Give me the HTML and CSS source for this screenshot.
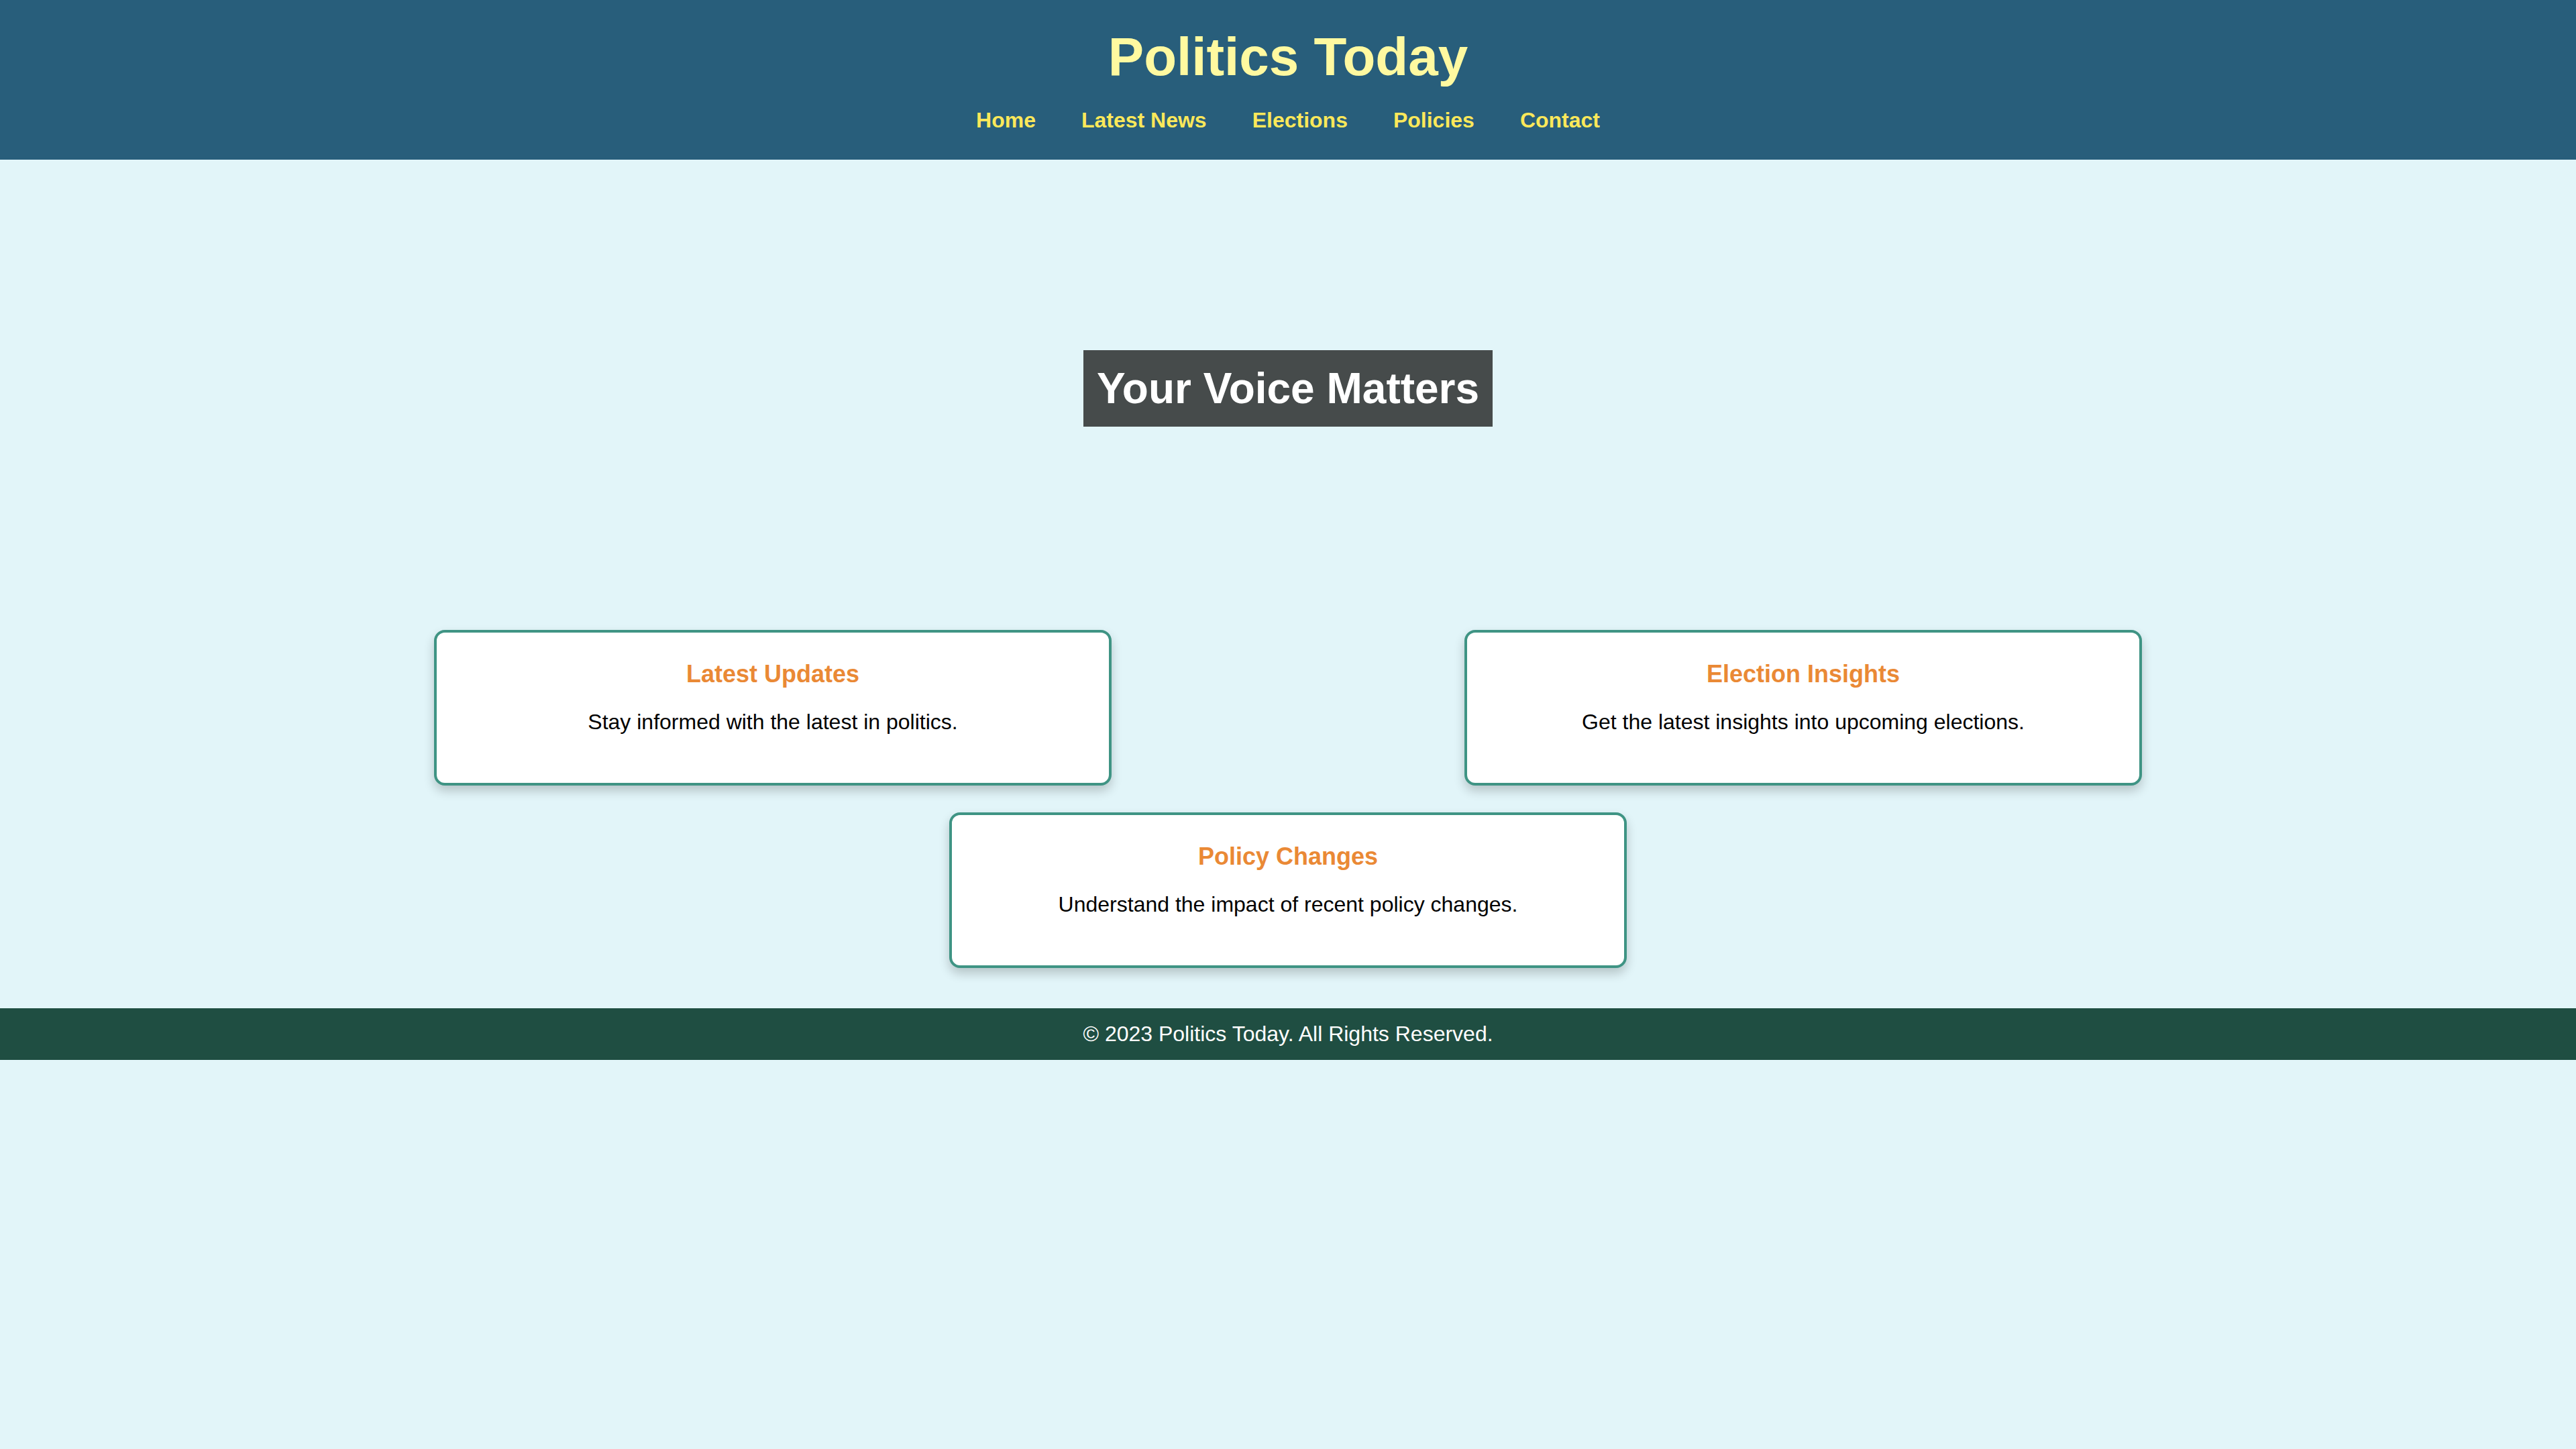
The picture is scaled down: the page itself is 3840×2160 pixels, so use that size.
FILE: index.html
```html
<!DOCTYPE html>
<html lang="en">
<head>
<meta charset="utf-8">
<title>Politics Today</title>
<link rel="stylesheet" href="styles.css">
</head>
<body>
<header class="site-header">
  <h1 class="site-title">Politics Today</h1>
  <nav class="site-nav">
    <a href="#">Home</a>
    <a href="#">Latest News</a>
    <a href="#">Elections</a>
    <a href="#">Policies</a>
    <a href="#">Contact</a>
  </nav>
</header>
<section class="hero">
  <h2 class="hero-title">Your Voice Matters</h2>
</section>
<main class="cards">
  <div class="card">
    <h3>Latest Updates</h3>
    <p>Stay informed with the latest in politics.</p>
  </div>
  <div class="card">
    <h3>Election Insights</h3>
    <p>Get the latest insights into upcoming elections.</p>
  </div>
  <div class="card">
    <h3>Policy Changes</h3>
    <p>Understand the impact of recent policy changes.</p>
  </div>
</main>
<footer class="site-footer">
  <p>&copy; 2023 Politics Today. All Rights Reserved.</p>
</footer>
</body>
</html>
```

FILE: styles.css
```css
html, body {
  margin: 0;
  padding: 0;
}
body {
  background: #e2f5f9;
  font-family: "Liberation Sans", Arial, Helvetica, sans-serif;
  color: #000;
}
.site-header {
  background: #285e7b;
  text-align: center;
  padding: 39px 0 40px;
}
.site-title {
  margin: 0 0 30px;
  font-size: 80px;
  line-height: 92px;
  font-weight: bold;
  color: #fff9a0;
}
.site-nav {
  display: flex;
  justify-content: center;
  gap: 68px;
  font-size: 32px;
  line-height: 37px;
}
.site-nav a {
  color: #fbe85a;
  font-weight: bold;
  text-decoration: none;
}
.hero {
  display: flex;
  justify-content: center;
  padding: 284px 0 243px;
}
.hero-title {
  margin: 0;
  padding: 20px;
  background: #464b4b;
  color: #fff;
  font-size: 64px;
  line-height: 74px;
  font-weight: bold;
}
.cards {
  display: flex;
  flex-wrap: wrap;
  justify-content: space-around;
  width: 80%;
  margin: 0 auto;
  padding: 40px 0;
}
.card {
  width: 30%;
  margin: 20px;
  padding: 40px;
  background: #fff;
  border: 4px solid #3f9484;
  border-radius: 16px;
  box-shadow: 0 8px 16px rgba(0, 0, 0, 0.2);
  text-align: center;
}
.card h3 {
  margin: 0;
  padding-top: 1px;
  font-size: 36px;
  line-height: 42px;
  font-weight: bold;
  color: #ea8935;
}
.card p {
  margin: 32px 0;
  font-size: 32px;
  line-height: 37px;
}
.site-footer {
  background: #1f4e42;
  color: #fff;
  text-align: center;
  padding: 20px;
}
.site-footer p {
  margin: 0;
  font-size: 32px;
  line-height: 37px;
}
```
